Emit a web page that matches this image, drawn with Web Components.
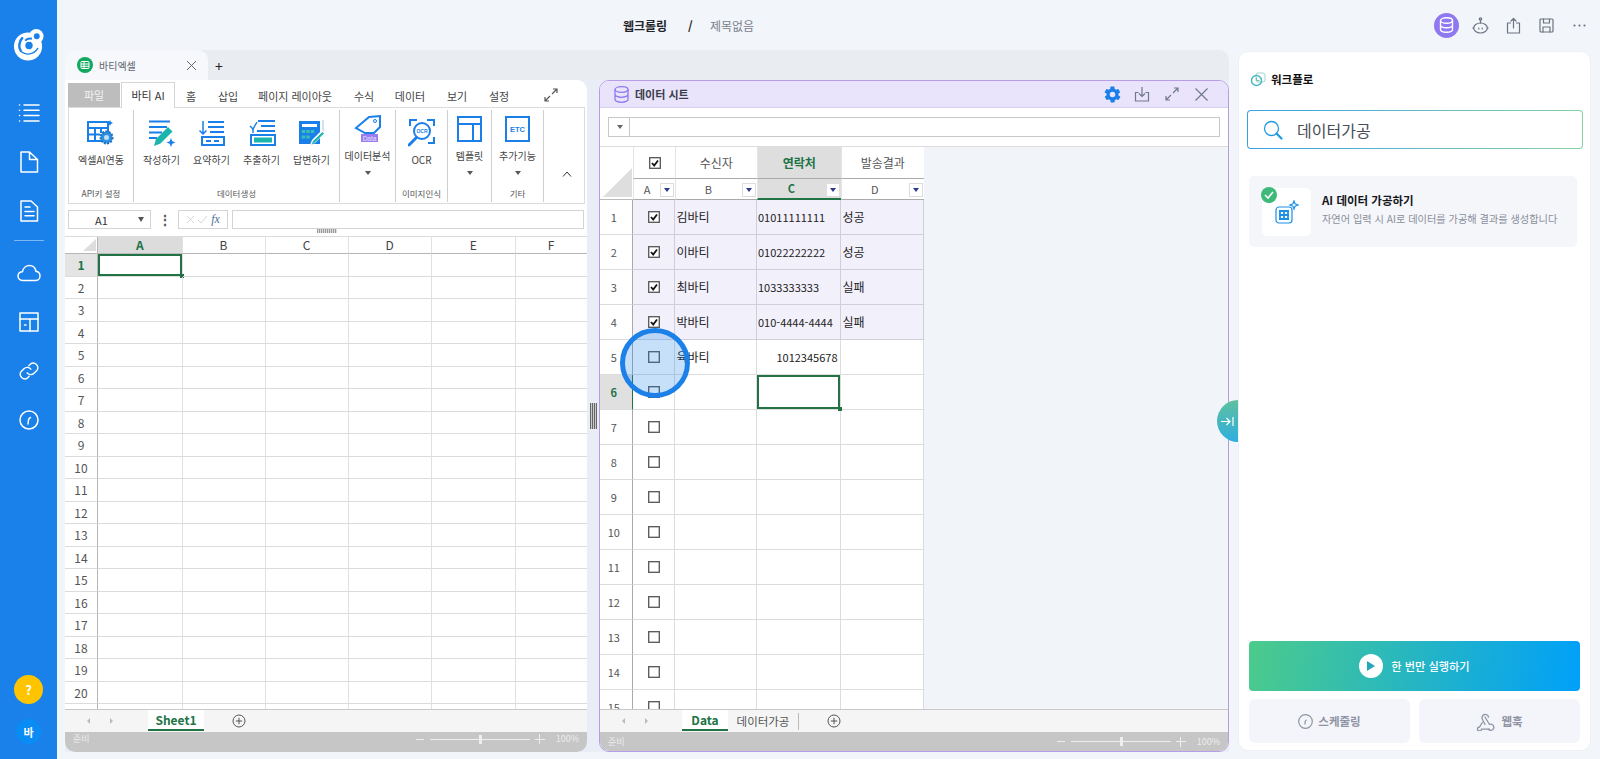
<!DOCTYPE html>
<html lang="ko">
<head>
<meta charset="utf-8">
<title>웹크롤링</title>
<style>
  html, body { margin: 0; height: 759px; overflow: hidden; }
  body { background: #f2f5fa; font-family: "Noto Sans CJK KR", "Noto Sans", sans-serif; }
  app-shell { width: 1600px; height: 759px; }
</style>
</head>
<body>
<app-shell>
  <app-sidebar slot="side"></app-sidebar>
  <app-topbar slot="top"></app-topbar>
  <work-space slot="work"></work-space>
  <work-flow slot="flow"></work-flow>
</app-shell>

<script>
const FONT = '"Noto Sans CJK KR", "Noto Sans", sans-serif';
const GREEN = "#217346";
const BLUE = "#1a7fe8";

class AppShell extends HTMLElement {
  constructor() { super(); this.attachShadow({ mode: "open" }); }
  connectedCallback() {
    this.shadowRoot.innerHTML = `
      <style>
        :host { display: grid; grid-template-columns: 57px 1fr; }
        .main { display: flex; flex-direction: column; height: 759px; }
        .body { display: flex; padding-left: 8px; height: 702px; }
      </style>
      <slot name="side"></slot>
      <div class="main">
        <slot name="top"></slot>
        <div class="body">
          <slot name="work"></slot>
          <slot name="flow"></slot>
        </div>
      </div>`;
  }
}

class AppSidebar extends HTMLElement {
  constructor() { super(); this.attachShadow({ mode: "open" }); }
  connectedCallback() {
    const s = `fill="none" stroke="#fff" stroke-width="1.500" stroke-linecap="round" stroke-linejoin="round"`;
    this.shadowRoot.innerHTML = `
      <style>
        :host { display: flex; flex-direction: column; align-items: center; height: 759px; background: #1a80ea; font-family: ${FONT}; }
        .logo { margin-top: 29px; height: 32px; }
        .ic { height: 49px; width: 57px; display: flex; align-items: center; justify-content: center; }
        .first { margin-top: 27px; }
        hr { width: 30px; margin: 5px 0 7px; border: 0; border-top: 1px solid #7db8f4; }
        .grow { flex: 1; }
        .help { width: 29px; height: 29px; border-radius: 50%; background: #ffc400; color: #fff; font-size: 13px; font-weight: 700; display: flex; align-items: center; justify-content: center; }
        .me { width: 25px; height: 25px; margin: 15px 0 15px; border-radius: 50%; background: #0a8cf5; color: #fff; font-size: 11px; font-weight: 700; display: flex; align-items: center; justify-content: center; }
      </style>
      <svg class="logo" width="32" height="33" viewBox="0 0 32 33">
        <circle cx="15" cy="18" r="14.500" fill="#fff"/>
        <circle cx="23.500" cy="7.500" r="7.500" fill="#fff"/>
        <circle cx="24" cy="7.500" r="3" fill="#1a80ea"/>
        <path d="M9 9.500C5.500 13 5 19 7.500 22.500" fill="none" stroke="#1a80ea" stroke-width="2.500" stroke-linecap="round"/>
        <path d="M8 23.500C13 27.500 21 26.500 25 20" fill="none" stroke="#1a80ea" stroke-width="1.500" stroke-linecap="round"/>
        <circle cx="16" cy="17" r="3.800" fill="#1a80ea"/>
        <path d="M12 12c2-2 5-2.500 7-2" fill="none" stroke="#1a80ea" stroke-width="2"/>
      </svg>
      <div class="ic first"><svg width="22" height="22" viewBox="0 0 22 22" ${s}><path d="M6 3h15M6 8.300h15M6 13.600h15M6 19h15M1.500 3h.1M1.500 8.300h.1M1.500 13.600h.1M1.500 19h.1"/></svg></div>
      <div class="ic"><svg width="20" height="22" viewBox="0 0 20 22" ${s}><path d="M2 1h8.500v7.500H18.500V21H2zM10.500 1l8 7.500"/></svg></div>
      <div class="ic"><svg width="20" height="22" viewBox="0 0 20 22" ${s}><path d="M2 1h10l6.500 6V21H2zM6 7h5M6 11.500h9M6 15.800h9"/></svg></div>
      <hr>
      <div class="ic"><svg width="24" height="18" viewBox="0 0 24 18" ${s}><path d="M6 16.500C3 16.500 1 14.500 1 12c0-2.500 2-4.300 4.500-4.300C6 4 9 1.500 12.500 1.500c3.500 0 6 2.500 6.300 5.800 2.500.3 4.200 2.200 4.200 4.600 0 2.500-2 4.600-4.500 4.600z"/></svg></div>
      <div class="ic"><svg width="20" height="20" viewBox="0 0 20 20" ${s}><rect x="1" y="1" width="18" height="18"/><path d="M1 7h18M11 7v12M5.500 13h1.500" /></svg></div>
      <div class="ic"><svg width="22" height="22" viewBox="0 0 24 24" ${s}><path d="M10 14a5 5 0 0 0 7.500.5l3-3a5 5 0 0 0-7-7l-1.700 1.700"/><path d="M14 10a5 5 0 0 0-7.500-.5l-3 3a5 5 0 0 0 7 7l1.700-1.700"/></svg></div>
      <div class="ic"><svg width="20" height="20" viewBox="0 0 20 20" ${s}><circle cx="10" cy="10" r="9"/><path d="M9 14l.5-4c.1-1 .8-2 2-2.500"/></svg></div>
      <div class="grow"></div>
      <div class="help">?</div>
      <div class="me">바</div>`;
  }
}

class AppTopbar extends HTMLElement {
  constructor() { super(); this.attachShadow({ mode: "open" }); }
  connectedCallback() {
    const s = `fill="none" stroke="#6d7382" stroke-width="1.200" stroke-linecap="round" stroke-linejoin="round"`;
    this.shadowRoot.innerHTML = `
      <style>
        :host { display: flex; align-items: center; height: 50px; flex: none; font-family: ${FONT}; font-size: 12px; }
        b { margin-left: 566px; color: #22242a; font-weight: 700; width: 44px; white-space: nowrap; }
        i { margin-left: 21px; font-style: normal; font-weight: 700; color: #222; width: 22px; }
        span { color: #7b808c; white-space: nowrap; }
        .tools { margin-left: auto; display: flex; align-items: center; margin-right: 4px; }
        .t { width: 33px; display: flex; justify-content: center; }
        .db { width: 25px; height: 25px; border-radius: 50%; background: #8f78f0; display: flex; align-items: center; justify-content: center; margin-right: 5px; }
      </style>
      <b>웹크롤링</b><i>/</i><span>제목없음</span>
      <div class="tools">
        <div class="db"><svg width="15" height="16" viewBox="0 0 15 16" fill="none" stroke="#fff" stroke-width="1.400"><ellipse cx="7.500" cy="3.500" rx="6" ry="2.700"/><path d="M1.500 3.500v9c0 1.500 2.700 2.700 6 2.700s6-1.200 6-2.700v-9M1.500 8c0 1.500 2.700 2.700 6 2.700s6-1.200 6-2.700"/></svg></div>
        <div class="t"><svg width="17" height="17" viewBox="0 0 17 17" ${s}><circle cx="8.500" cy="2" r="1.200"/><path d="M8.500 3.200v2.800"/><ellipse cx="8.500" cy="11" rx="6.800" ry="5"/><path d="M1.700 11H.8M15.300 11h.9M6.800 11v1M10.200 11v1"/></svg></div>
        <div class="t"><svg width="15" height="17" viewBox="0 0 15 17" ${s}><path d="M4.500 6H1.500v10h12V6h-3M7.500 11V1.500M5 4l2.500-2.500L10 4"/></svg></div>
        <div class="t"><svg width="15" height="15" viewBox="0 0 15 15" ${s}><rect x="1" y="1" width="13" height="13" rx="1"/><path d="M4.500 1v4h6V1M4 14V9h7v5"/></svg></div>
        <div class="t"><svg width="13" height="3" viewBox="0 0 13 3" fill="#6d7382"><circle cx="1.500" cy="1.500" r="1.100"/><circle cx="6.500" cy="1.500" r="1.100"/><circle cx="11.500" cy="1.500" r="1.100"/></svg></div>
      </div>`;
  }
}

class WorkSpace extends HTMLElement {
  constructor() { super(); this.attachShadow({ mode: "open" }); }
  connectedCallback() {
    this.shadowRoot.innerHTML = `
      <style>
        :host { display: flex; flex-direction: column; position: relative; width: 1164px; height: 702px; font-family: ${FONT};
                background: linear-gradient(#e9ecf1 0, #e9ecf1 30px, #e9edf5 30px); border-radius: 10px 10px 0 0; }
        .strip { display: flex; align-items: stretch; height: 30px; flex: none; }
        .tab { width: 143px; background: #f6f8fb; border-radius: 10px 10px 0 0; display: flex; align-items: center; padding: 0 12px; box-sizing: border-box; font-size: 10px; color: #5f6470; gap: 6px; }
        .tab .dot { width: 16px; height: 16px; border-radius: 50%; background: #12a860; display: flex; align-items: center; justify-content: center; flex: none; }
        .tab .x { margin-left: auto; display: flex; margin-right: -1px; }
        .plus { width: 22px; text-align: center; font-size: 14px; color: #222; line-height: 32px; }
        .panels { display: flex; height: 672px; }
        .split { width: 12px; display: flex; align-items: center; justify-content: center; }
        .grip { width: 7px; height: 26px; background: repeating-linear-gradient(90deg, #666 0 1px, #c9c9c9 1px 2px); }
        .edge { position: absolute; left: 1152px; top: 350px; width: 21px; height: 42px; border-radius: 21px 0 0 21px;
                background: linear-gradient(#5fc0a0, #2eaee0); display: flex; align-items: center; justify-content: center; }
      </style>
      <div class="strip">
        <div class="tab">
          <span class="dot"><svg width="10" height="10" viewBox="0 0 10 10" fill="none" stroke="#fff" stroke-width="1"><rect x="1" y="1.500" width="8" height="7" rx="1"/><path d="M1 4h8M1 6.300h8M4 1.500v7"/></svg></span>
          바티엑셀
          <span class="x"><svg width="11" height="11" viewBox="0 0 11 11" stroke="#666" stroke-width="1"><path d="M1 1l9 9M10 1l-9 9"/></svg></span>
        </div>
        <div class="plus">+</div>
      </div>
      <div class="panels">
        <excel-panel></excel-panel>
        <div class="split"><div class="grip"></div></div>
        <data-panel></data-panel>
      </div>
      <div class="edge"><svg width="15" height="11" viewBox="0 0 15 11" fill="none" stroke="#fff" stroke-width="1.200"><path d="M1 5.500h9M6.500 2l3.500 3.500L6.500 9M13 1v9"/></svg></div>`;
  }
}

class RibbonItem extends HTMLElement {
  constructor() { super(); this.attachShadow({ mode: "open" }); }
  connectedCallback() {
    const caret = this.hasAttribute("caret");
    this.shadowRoot.innerHTML = `
      <style>
        :host { display: flex; flex-direction: column; align-items: center; width: 50px; font-size: 10px; color: #444; white-space: nowrap; line-height: 14px; }
        .icon { height: 28px; display: flex; align-items: flex-end; justify-content: center; margin-top: ${caret ? 4 : 9}px; }
        .label { margin-top: ${caret ? 7 : 6}px; }
        .caret { width: 0; height: 0; margin-top: 8px; border: 3px solid transparent; border-top: 4px solid #555; border-bottom: 0; }
      </style>
      <div class="icon"><slot></slot></div>
      <div class="label">${this.getAttribute("label")}</div>
      ${caret ? `<div class="caret"></div>` : ""}`;
  }
}

class RibbonGroup extends HTMLElement {
  constructor() { super(); this.attachShadow({ mode: "open" }); }
  connectedCallback() {
    const w = this.getAttribute("w");
    const last = this.hasAttribute("last");
    this.shadowRoot.innerHTML = `
      <style>
        :host { display: flex; flex-direction: column; box-sizing: border-box; width: ${w}px; height: 92px; margin-top: 2px; ${last ? "" : "border-right: 1px solid #cfcfcf;"} }
        .items { flex: 1; display: flex; justify-content: center; }
        .name { height: 18px; line-height: 18px; font-size: 8.500px; color: #555; text-align: center; }
      </style>
      <div class="items"><slot></slot></div>
      <div class="name">${this.getAttribute("name") || ""}</div>`;
  }
}

class BottomBars extends HTMLElement {
  constructor() { super(); this.attachShadow({ mode: "open" }); }
  connectedCallback() {
    const left = this.getAttribute("variant") === "left";
    const tabs = left
      ? `<div style="width:35px"></div><div class="sheet on" style="width:56px;margin-left:-1px">Sheet1</div><div class="add" style="margin-left:28px">${this.plus()}</div>`
      : `<div style="width:33px"></div><div class="sheet on" style="width:46px">Data</div><div class="sheet two" style="width:71px">데이터가공</div><div class="add" style="margin-left:28px">${this.plus()}</div>`;
    this.shadowRoot.innerHTML = `
      <style>
        :host { display: block; flex: none; }
        .tabs { height: 23px; box-sizing: border-box; border-top: 1px solid #c8c8c8; background: #f5f5f5; display: flex; align-items: flex-start; }
        .nav { padding-left: 22px; box-sizing: border-box; display: flex; gap: 20px; height: 21px; align-items: center; flex: none; width: 49px; }
        .nav i { width: 0; height: 0; border: 3px solid transparent; }
        .nav i:first-child { border-right: 3px solid #bbb; border-left: 0; }
        .nav i:last-child { border-left: 3px solid #bbb; border-right: 0; }
        .sheet { height: 21px; box-sizing: border-box; line-height: 19px; font-size: 12px; text-align: center; color: #555; }
        .sheet.on { color: ${GREEN}; font-weight: 700; background: #fff; border-bottom: 2px solid ${GREEN}; }
        .sheet.two { font-size: 11.500px; border-right: 1px solid #bbb; margin-top: 3px; height: 17px; line-height: 16px; }
        .add { height: 21px; display: flex; align-items: center; }
        .status { height: ${left ? 20 : 19}px; background: #c6c6c6; display: flex; align-items: ${left ? "flex-start" : "center"}; padding: 0 8px; font-size: 9px; color: #ececec; line-height: 14px; ${left ? "border-radius: 0 0 10px 10px;" : ""} }
        .status .word { margin-right: auto; }
        .zoom { display: flex; align-items: center; height: 14px; color: #ececec; }
        .zoom u { display: block; width: 8px; height: 1px; background: #eee; margin-right: 6px; }
        .zoom s { display: block; position: relative; width: 100px; height: 1px; background: #eee; margin-right: 5px; }
        .zoom s::after { content: ""; position: absolute; left: 49px; top: -4px; width: 3px; height: 9px; background: #eee; }
        .zoom em { display: block; position: relative; width: 10px; height: 10px; margin-right: 11px; background: linear-gradient(#eee, #eee) center / 10px 1px no-repeat, linear-gradient(#eee, #eee) center / 1px 10px no-repeat; }
      </style>
      <div class="tabs">
        <div class="nav"><i></i><i></i></div>
        ${tabs}
      </div>
      <div class="status">
        <span class="word">준비</span>
        <div class="zoom"><u></u><s></s><em></em><span>100%</span></div>
      </div>`;
  }
  plus() {
    return `<svg width="14" height="14" viewBox="0 0 14 14" fill="none" stroke="#555" stroke-width="1"><circle cx="7" cy="7" r="6"/><path d="M3.800 7h6.400M7 3.800v6.400"/></svg>`;
  }
}

class ExcelGrid extends HTMLElement {
  constructor() { super(); this.attachShadow({ mode: "open" }); }
  connectedCallback() {
    const cols = ["A", "B", "C", "D", "E", "F"];
    let html = `<div class="corner"><svg width="13" height="12" viewBox="0 0 13 12"><path d="M13 0v12H0z" fill="#ddd"/></svg></div>`;
    cols.forEach((c, i) => { html += `<div class="col ${i === 0 ? "on" : ""}">${c}</div>`; });
    for (let r = 1; r <= 21; r++) {
      html += `<div class="row ${r === 1 ? "on" : ""}">${r <= 20 ? r : ""}</div>`;
      cols.forEach((c, i) => { html += `<div class="cell ${r === 1 && i === 0 ? "sel" : ""}"></div>`; });
    }
    this.shadowRoot.innerHTML = `
      <style>
        :host { display: block; height: 472px; overflow: hidden; background: #fff; }
        .g { display: grid; grid-template-columns: 33px 84.500px 83px 83px 83.500px 83.500px 72px; grid-template-rows: 17px repeat(21, 22.500px); }
        .corner { display: flex; align-items: flex-end; justify-content: flex-end; padding: 0 1px 2px 0; border-bottom: 1px solid #b5b5b5; border-right: 1px solid #b5b5b5; box-sizing: border-box; }
        .col { font-size: 12px; color: #444; text-align: center; line-height: 16px; border-bottom: 1px solid #b5b5b5; box-sizing: border-box; border-right: 1px solid #e2e2e2; }
        .col.on { background: #dcdcdc; color: ${GREEN}; font-weight: 700; border-bottom: 1px solid #bbb; }
        .row { font-size: 12px; color: #555; text-align: center; line-height: 22px; background: #fff; border-bottom: 1px solid #dcdcdc; border-right: 1px solid #b5b5b5; box-sizing: border-box; }
        .row.on { background: #e4e4e4; color: ${GREEN}; font-weight: 700; }
        .cell { border-bottom: 1px solid #dcdcdc; border-right: 1px solid #e0e0e0; box-sizing: border-box; position: relative; }
        .sel { box-shadow: inset 0 0 0 2px ${GREEN}; }
        .sel::after { content: ""; position: absolute; right: -2px; bottom: -2px; width: 4px; height: 4px; background: ${GREEN}; }
      </style>
      <div class="g">${html}</div>`;
  }
}

class ExcelPanel extends HTMLElement {
  constructor() { super(); this.attachShadow({ mode: "open" }); }
  connectedCallback() {
    const b = `fill="none" stroke="${BLUE}" stroke-width="2"`;
    this.shadowRoot.innerHTML = `
      <style>
        :host { display: flex; flex-direction: column; width: 522px; height: 672px; background: #fff; border-radius: 0 10px 10px 10px; font-family: ${FONT}; }
        .tabs { display: flex; height: 27px; flex: none; font-size: 11px; color: #444; padding-left: 3px; box-sizing: border-box; }
        .file { width: 52px; height: 24px; margin-top: 3px; background: #bdbdbd; color: #f2f2f2; text-align: center; line-height: 24px; margin-right: 1px; }
        .cur { width: 54px; height: 26px; margin-top: 2px; box-sizing: border-box; border: 1px solid #d5d5d5; border-bottom: 0; background: #fff; text-align: center; line-height: 25px; color: #333; position: relative; z-index: 1; }
        .t { text-align: center; line-height: 32px; height: 27px; }
        .exp { margin-left: 27px; display: flex; align-items: center; height: 27px; padding-top: 2px; box-sizing: border-box; }
        .ribbon { display: flex; height: 97px; flex: none; margin: 0 2px 0 3px; border: 1px solid #dcdcdc; box-sizing: border-box; }
        .col7 { display: flex; align-items: flex-end; justify-content: center; height: 100%; padding: 0 0 7px 6px; box-sizing: border-box; width: 100%; }
        .fbar { height: 33px; flex: none; box-sizing: border-box; padding: 6px 3px 0; position: relative; border-bottom: 1px solid #dcdcdc; display: flex; align-items: flex-start; }
        .name { width: 83px; height: 19px; box-sizing: border-box; border: 1px solid #d4d4d4; font-size: 11px; color: #333; display: flex; align-items: center; justify-content: center; position: relative; padding-right: 16px; }
        .name::after { content: ""; position: absolute; right: 6px; top: 6px; border: 3px solid transparent; border-top: 5px solid #555; border-bottom: 0; }
        .dots { width: 27px; text-align: center; font-size: 14px; font-weight: 700; color: #555; line-height: 18px; }
        .fx { width: 50px; height: 19px; box-sizing: border-box; border: 1px solid #d4d4d4; display: flex; align-items: center; justify-content: center; gap: 3px; font: italic 12px "Liberation Serif", serif; color: #4a6d9c; }
        .input { flex: 1; height: 19px; box-sizing: border-box; border: 1px solid #d4d4d4; margin-left: 4px; }
        .drag { position: absolute; left: 252px; bottom: 3px; width: 20px; height: 4px; background: repeating-linear-gradient(90deg, #999 0 1px, #ddd 1px 2px); }
      </style>
      <div class="tabs">
        <div class="file">파일</div>
        <div class="cur">바티 AI</div>
        <div class="t" style="width:32px">홈</div>
        <div class="t" style="width:42px">삽입</div>
        <div class="t" style="width:92px">페이지 레이아웃</div>
        <div class="t" style="width:46px">수식</div>
        <div class="t" style="width:46px">데이터</div>
        <div class="t" style="width:48px">보기</div>
        <div class="t" style="width:36px">설정</div>
        <div class="exp"><svg width="14" height="14" viewBox="0 0 14 14" fill="none" stroke="#555" stroke-width="1.200"><path d="M8 6l5-5M9 1h4v4M6 8l-5 5M1 9v4h4"/></svg></div>
      </div>
      <div class="ribbon">
        <ribbon-group w="65" name="API키 설정">
          <ribbon-item label="엑셀AI연동"><svg width="28" height="28" viewBox="0 0 28 28">
            <rect x="1" y="3" width="20" height="19" ${b}/><path d="M1 9h20M1 15.500h12M8 9v13M14 9v5" ${b}/>
            <circle cx="19.500" cy="18.500" r="6" fill="#2f8fe0" stroke="#1f6fc0" stroke-width="2" stroke-dasharray="2 1.300"/><circle cx="19.500" cy="18.500" r="2.500" fill="#bfe0f8"/>
            <path d="M23 1l1 2 2 1-2 1-1 2-1-2-2-1 2-1z" fill="${BLUE}"/></svg></ribbon-item>
        </ribbon-group>
        <ribbon-group w="206" name="데이터생성">
          <ribbon-item label="작성하기"><svg width="28" height="28" viewBox="0 0 28 28">
            <path d="M1 2.500h21M1 8h18M1 13.500h13M1 19h8" fill="none" stroke="${BLUE}" stroke-width="2.200"/>
            <path d="M6 27l2-7L20 8l4.500 4.500L12.500 24.500z" fill="#1cb5ad"/><path d="M23 19l1.300 3.200 3.200 1.300-3.200 1.300L23 28l-1.300-3.200-3.200-1.300 3.200-1.300z" fill="${BLUE}"/></svg></ribbon-item>
          <ribbon-item label="요약하기"><svg width="28" height="28" viewBox="0 0 28 28">
            <path d="M10 3h16M10 8h16M12 13h14" ${b}/><path d="M5 2v13M1.500 11.500L5 15l3.500-3.500" fill="none" stroke="${BLUE}" stroke-width="1.500"/>
            <rect x="4" y="18" width="22" height="8" ${b}/><path d="M8 22h5M16 22h5" ${b}/></svg></ribbon-item>
          <ribbon-item label="추출하기"><svg width="28" height="28" viewBox="0 0 28 28">
            <path d="M10 2h17M13 7h14M9 12h18" ${b}/><path d="M2 7l3 3 4-7" fill="none" stroke="${BLUE}" stroke-width="1.400"/><path d="M5 9v5" stroke="${BLUE}" stroke-width="1.400"/>
            <rect x="3" y="16" width="24" height="10" ${b}/><rect x="6" y="18.500" width="18" height="5" fill="#1cb5ad"/></svg></ribbon-item>
          <ribbon-item label="답변하기"><svg width="28" height="28" viewBox="0 0 28 28">
            <rect x="1" y="2" width="21" height="23" fill="${BLUE}"/><rect x="4" y="5" width="15" height="3" fill="#fff"/>
            <path d="M5.500 11v3M10 11v3M14.500 11v3M5.500 16.500v3M10 16.500v3" stroke="#36c0b5" stroke-width="3.500"/>
            <path d="M25 1v15" stroke="#9cc8f2"/><path d="M12 26l2-5 10-10 3 3-10 10z" fill="#fff"/><path d="M13.500 26l1.500-4 9.500-9 1.500 1.500-9.500 9.300z" fill="#1cb5ad"/></svg></ribbon-item>
        </ribbon-group>
        <ribbon-group w="56">
          <ribbon-item caret label="데이터분석"><svg width="28" height="28" viewBox="0 0 28 28">
            <path d="M2 14L15 3l11-1v11l-6 6H11z" ${b}/><circle cx="21" cy="7" r="1.500" fill="none" stroke="${BLUE}"/>
            <rect x="7" y="20" width="17" height="8" fill="#9a7cf0"/><text x="15.500" y="26.500" text-anchor="middle" font-size="6.500" fill="#e8e2ff" font-family="Liberation Sans, sans-serif">Data</text></svg></ribbon-item>
        </ribbon-group>
        <ribbon-group w="52" name="이미지인식">
          <ribbon-item label="OCR"><svg width="28" height="29" viewBox="0 0 28 29">
            <path d="M2 8V2h7M19 2h7v6M26 19v6h-6" ${b}/><circle cx="14" cy="13" r="8" ${b}/>
            <path d="M8 20L1 27" stroke="${BLUE}" stroke-width="3" stroke-linecap="round"/><text x="14" y="15" text-anchor="middle" font-size="5" font-weight="700" fill="${BLUE}" font-family="Liberation Sans, sans-serif">OCR</text></svg></ribbon-item>
        </ribbon-group>
        <ribbon-group w="44">
          <ribbon-item caret label="템플릿"><svg width="25" height="26" viewBox="0 0 25 26">
            <rect x="1" y="1" width="23" height="24" ${b}/><path d="M1 8h23M16 8v17" ${b}/></svg></ribbon-item>
        </ribbon-group>
        <ribbon-group w="52" name="기타">
          <ribbon-item caret label="추가기능"><svg width="25" height="26" viewBox="0 0 25 26">
            <rect x="1" y="1" width="23" height="24" ${b}/><text x="12.500" y="16" text-anchor="middle" font-size="7.500" font-weight="700" fill="${BLUE}" font-family="Liberation Sans, sans-serif">ETC</text></svg></ribbon-item>
        </ribbon-group>
        <ribbon-group w="40" last>
          <div class="col7"><svg width="10" height="6" viewBox="0 0 10 6" fill="none" stroke="#333" stroke-width="1"><path d="M1 5.500L5 1l4 4.500"/></svg></div>
        </ribbon-group>
      </div>
      <div class="fbar">
        <div class="name">A1</div>
        <div class="dots">⋮</div>
        <div class="fx"><svg width="22" height="9" viewBox="0 0 22 9" fill="none" stroke="#d8d8d8" stroke-width="1"><path d="M1 1l7 7M8 1L1 8M12 5l3 3 6-7"/></svg>fx</div>
        <div class="input"></div>
        <div class="drag"></div>
      </div>
      <excel-grid></excel-grid>
      <bottom-bars variant="left"></bottom-bars>`;
  }
}

class DataGrid extends HTMLElement {
  constructor() { super(); this.attachShadow({ mode: "open" }); }
  connectedCallback() {
    const rows = [
      ["김바티", "01011111111", "성공"],
      ["이바티", "01022222222", "성공"],
      ["최바티", "1033333333", "실패"],
      ["박바티", "010-4444-4444", "실패"],
      ["육바티", "1012345678", ""]
    ];
    const box = on => `<svg width="12" height="12" viewBox="0 0 12 12"><rect x=".7" y=".7" width="10.600" height="10.600" fill="#fff" stroke="#555" stroke-width="1.300"/>${on ? `<path d="M3 6l2.200 2.500L9 3.500" fill="none" stroke="#111" stroke-width="1.800"/>` : ""}</svg>`;
    const drop = `<i class="drop"></i>`;
    let html = `
      <div class="corner"><svg width="29" height="29" viewBox="0 0 29 29"><path d="M29 0v29H0z" fill="#dedede"/></svg></div>
      <div class="h mid2">${box(true)}</div><div class="h">수신자</div><div class="h on">연락처</div><div class="h">발송결과</div>
      <div class="l" style="padding-right:14px">A${drop}</div><div class="l">B${drop}</div><div class="l on">C${drop}</div><div class="l">D${drop}</div>`;
    for (let r = 1; r <= 15; r++) {
      const d = rows[r - 1] || ["", "", ""];
      const tint = r <= 4 ? "tint" : "";
      html += `<div class="n ${r === 6 ? "on" : ""}">${r}</div>`;
      html += `<div class="c mid ${tint}">${box(r <= 4)}</div>`;
      html += `<div class="c ${tint}">${d[0]}</div>`;
      html += `<div class="c tel ${tint} ${r === 5 ? "right" : ""} ${r === 6 ? "sel" : ""}">${d[1]}</div>`;
      html += `<div class="c ${tint}">${d[2]}</div>`;
    }
    this.shadowRoot.innerHTML = `
      <style>
        :host { display: block; height: 562px; overflow: hidden; position: relative; background: #f1f5f9; }
        .g { display: grid; width: 324.500px; grid-template-columns: 32.500px 42px 82.500px 83.500px 83.500px; grid-template-rows: 32px 20.500px repeat(15, 35px); }
        .corner { grid-row: 1 / 3; background: #fff; display: flex; align-items: flex-end; justify-content: flex-end; padding: 0 1px 2px 0; box-sizing: border-box; border-bottom: 1px solid #bbb; }
        .h { background: #fff; font-size: 12px; color: #555; display: flex; align-items: center; justify-content: center; border-bottom: 1px solid #aaa; box-sizing: border-box; border-left: 1px solid #e4e4e4; }
        .h.on { background: #dedede; color: ${GREEN}; font-weight: 700; }
        .h.mid2 { padding-left: 1px; }
        .l { background: #fff; font-size: 11px; color: #555; display: flex; align-items: center; justify-content: center; padding-right: 16px; box-sizing: border-box; position: relative; border-bottom: 1px solid #aaa; border-left: 1px solid #e4e4e4; }
        .l.on { background: #dedede; color: ${GREEN}; font-weight: 700; border-bottom: 2px solid ${GREEN}; }
        .drop { position: absolute; right: 1px; top: 4px; width: 14px; height: 14px; background: #fff; border: 1px solid #ddd; box-sizing: border-box; }
        .drop::after { content: ""; position: absolute; left: 3px; top: 4px; border: 3px solid transparent; border-top: 4px solid #2b3a8c; border-bottom: 0; }
        .n { background: #fff; font-size: 11px; color: #555; display: flex; align-items: center; justify-content: center; padding-right: 4px; box-sizing: border-box; border-bottom: 1px solid #dcdcdc; border-right: 1px solid #aaa; }
        .n.on { background: #e0e0e0; color: ${GREEN}; font-weight: 700; border-right: 1px solid ${GREEN}; }
        .c { background: #fff; font-size: 12px; color: #222; display: flex; align-items: center; padding-left: 2px; box-sizing: border-box; border-bottom: 1px solid #dcdcdc; border-right: 1px solid #dcdcdc; white-space: nowrap; overflow: hidden; }
        .tint { background: #f2f0fb; border-color: #cfcfdc; }
        .mid { justify-content: center; padding: 0 0 0 1px; }
        .tel { font-size: 11px; padding-left: 1px; }
        .right { justify-content: flex-end; padding-right: 2px; }
        .sel { box-shadow: inset 0 0 0 2px ${GREEN}; overflow: visible; position: relative; }
        .sel::after { content: ""; position: absolute; right: -2px; bottom: -2px; width: 4px; height: 4px; background: ${GREEN}; }
        .pointer { position: absolute; left: 20px; top: 181px; width: 70px; height: 70px; box-sizing: border-box; border-radius: 50%; border: 5px solid #1b80e8; background: rgba(30, 130, 235, .25); }
      </style>
      <div class="g">${html}</div>
      <div class="pointer"></div>`;
  }
}

class DataPanel extends HTMLElement {
  constructor() { super(); this.attachShadow({ mode: "open" }); }
  connectedCallback() {
    const g = `fill="none" stroke="#6f7890" stroke-width="1.200"`;
    this.shadowRoot.innerHTML = `
      <style>
        :host { display: flex; flex-direction: column; width: 630px; height: 672px; box-sizing: border-box; border: 1px solid #b79de6; border-radius: 10px; background: #fff; overflow: hidden; font-family: ${FONT}; }
        .head { height: 27px; flex: none; background: #e9e4fb; border-bottom: 1px solid #d6d0ec; box-sizing: border-box; display: flex; align-items: center; padding-left: 14px; font-size: 11px; font-weight: 700; color: #3a3d4a; gap: 6px; }
        .acts { margin-left: auto; display: flex; align-items: center; margin-right: 12px; }
        .a { width: 29.500px; display: flex; justify-content: center; }
        .cellbar { height: 39px; flex: none; box-sizing: border-box; border-bottom: 1px solid #dcdcdc; padding: 9px 8px 0 8px; display: flex; }
        .pick { width: 22px; height: 20px; box-sizing: border-box; border: 1px solid #c8c8c8; position: relative; }
        .pick::after { content: ""; position: absolute; left: 8px; top: 7px; border: 3px solid transparent; border-top: 4px solid #666; border-bottom: 0; }
        .val { flex: 1; height: 20px; box-sizing: border-box; border: 1px solid #c8c8c8; border-left: 0; }
      </style>
      <div class="head">
        <svg width="15" height="17" viewBox="0 0 15 17" fill="none" stroke="#8f78f0" stroke-width="1.300"><ellipse cx="7.500" cy="3.500" rx="6.500" ry="2.800"/><path d="M1 3.500v10c0 1.500 2.900 2.800 6.500 2.800s6.500-1.300 6.500-2.800v-10M1 8.500c0 1.500 2.900 2.800 6.500 2.800s6.500-1.300 6.500-2.800"/></svg>
        데이터 시트
        <div class="acts">
          <div class="a"><svg width="19" height="19" viewBox="0 0 24 24"><path fill="${BLUE}" d="M19.400 13c.1-.3.1-.7.1-1s0-.7-.1-1l2.100-1.600c.2-.2.200-.4.100-.6l-2-3.500c-.1-.2-.4-.3-.6-.2l-2.500 1c-.5-.4-1.100-.7-1.700-1l-.4-2.600c0-.3-.2-.5-.5-.5h-4c-.3 0-.5.200-.5.500l-.4 2.600c-.6.300-1.200.6-1.700 1l-2.500-1c-.2-.1-.5 0-.6.200l-2 3.500c-.1.200-.1.500.1.600L4.600 11c-.1.300-.1.700-.1 1s0 .7.100 1l-2.100 1.600c-.2.200-.2.400-.1.600l2 3.500c.1.200.4.300.6.200l2.500-1c.5.400 1.100.7 1.700 1l.4 2.600c0 .3.200.5.500.5h4c.3 0 .5-.2.500-.5l.4-2.600c.6-.3 1.200-.6 1.700-1l2.500 1c.2.100.5 0 .6-.2l2-3.500c.1-.2.1-.5-.1-.6zM12 15.500a3.500 3.500 0 1 1 0-7 3.500 3.500 0 0 1 0 7z"/></svg></div>
          <div class="a"><svg width="16" height="16" viewBox="0 0 16 16" ${g}><path d="M4.500 6.500H1.500V15h13V6.500h-3M8 1v9M5 7.500L8 10.500l3-3"/></svg></div>
          <div class="a"><svg width="14" height="14" viewBox="0 0 14 14" ${g}><path d="M8 6l5-5M9 1h4v4M6 8l-5 5M1 9v4h4"/></svg></div>
          <div class="a"><svg width="13" height="13" viewBox="0 0 13 13" ${g}><path d="M.5.500l12 12M12.500.500l-12 12"/></svg></div>
        </div>
      </div>
      <div class="cellbar"><div class="pick"></div><div class="val"></div></div>
      <data-grid></data-grid>
      <bottom-bars variant="right"></bottom-bars>`;
  }
}

class WorkFlow extends HTMLElement {
  constructor() { super(); this.attachShadow({ mode: "open" }); }
  connectedCallback() {
    this.shadowRoot.innerHTML = `
      <style>
        :host { display: flex; flex-direction: column; width: 353px; height: 700px; margin: 1px 0 0 9px; box-sizing: border-box; background: #fff; border-radius: 10px; border: 1px solid #eef0f5; font-family: ${FONT}; }
        .title { display: flex; align-items: center; gap: 5px; height: 14px; margin: 20px 0 0 11px; font-size: 11.500px; font-weight: 700; color: #111; }
        .search { display: flex; align-items: center; height: 39px; margin: 24px 7px 0 8px; flex: none; box-sizing: border-box; border: 1px solid transparent; border-radius: 4px;
                  background: linear-gradient(#fff, #fff) padding-box, linear-gradient(90deg, #3a9fe8, #86d2a4) border-box; padding-left: 15px; gap: 14px; font-size: 16px; color: #4a4d55; }
        .card { display: flex; align-items: center; height: 71px; flex: none; margin: 27px 13px 0 10px; background: #f4f6fa; border-radius: 5px; padding-left: 13px; }
        .pic { width: 49px; height: 48px; background: #fff; border-radius: 5px; position: relative; display: flex; align-items: center; justify-content: center; flex: none; }
        .ok { position: absolute; left: -1px; top: -1px; width: 16px; height: 16px; border-radius: 50%; background: #3fb97a; display: flex; align-items: center; justify-content: center; }
        .txt { margin: -5px 0 0 11px; white-space: nowrap; }
        .txt b { display: block; font-size: 11.500px; font-weight: 700; color: #15171c; line-height: 16px; }
        .txt span { display: block; font-size: 10.200px; color: #8a8f9a; line-height: 14px; margin-top: 4px; }
        .grow { flex: 1; }
        .run { display: flex; align-items: center; justify-content: center; gap: 8px; height: 50px; flex: none; margin: 0 10px; border-radius: 4px; background: linear-gradient(100deg, #4ccb8b, #00a0fa); color: #fff; font-size: 11.200px; font-weight: 500; }
        .play { width: 24px; height: 24px; border-radius: 50%; background: #fff; display: flex; align-items: center; justify-content: center; }
        .two { display: grid; grid-template-columns: 1fr 1fr; gap: 9px; margin: 8px 10px 7px; }
        .btn { height: 44px; background: #f3f5fa; border-radius: 6px; display: flex; align-items: center; justify-content: center; gap: 5px; font-size: 11.500px; font-weight: 700; color: #8f93a3; }
      </style>
      <div class="title">
        <svg width="16" height="15" viewBox="0 0 16 15" fill="none" stroke-width="1.500"><rect x="6" y="1" width="9" height="9" rx="2" stroke="#9fd4cf" stroke-width="1"/><circle cx="6.500" cy="8.500" r="5" stroke="#4bb8c4"/><path d="M6.500 5.500v3h3" stroke="#66c9a8" stroke-width="1"/></svg>
        워크플로
      </div>
      <div class="search">
        <svg width="20" height="20" viewBox="0 0 20 20" fill="none"><circle cx="8.500" cy="8.500" r="7" stroke="#1f9be0" stroke-width="1.300"/><path d="M13.500 13.500l5 5" stroke="#1f9be0" stroke-width="2.200" stroke-linecap="round"/></svg>
        데이터가공
      </div>
      <div class="card">
        <div class="pic">
          <span class="ok"><svg width="10" height="8" viewBox="0 0 10 8" fill="none" stroke="#fff" stroke-width="1.600"><path d="M1 4l3 3 5-6"/></svg></span>
          <svg width="24" height="24" viewBox="0 0 24 24" fill="none" stroke="#1a8fe8" stroke-width="1.200"><rect x="1" y="7" width="16" height="16" rx="3"/><path d="M4 11h10M4 15h10M4 19h10M5 10.500v9M9 10.500v9M13 10.500v9" stroke-width="1.800"/><path d="M19 1l1.100 2.900L23 5l-2.900 1.100L19 9l-1.100-2.900L15 5l2.900-1.100z"/></svg>
        </div>
        <div class="txt"><b>AI 데이터 가공하기</b><span>자연어 입력 시 AI로 데이터를 가공해 결과를 생성합니다</span></div>
      </div>
      <div class="grow"></div>
      <div class="run"><span class="play"><svg width="8" height="10" viewBox="0 0 8 10"><path d="M0 0l8 5-8 5z" fill="#22a8b8"/></svg></span>한 번만 실행하기</div>
      <div class="two">
        <div class="btn"><svg width="15" height="15" viewBox="0 0 15 15" fill="none" stroke="#8f93a3" stroke-width="1.200"><circle cx="7.500" cy="7.500" r="6.800"/><path d="M6.800 10.500l.4-3c.1-.8.6-1.400 1.500-1.800"/></svg>스케줄링</div>
        <div class="btn"><svg width="20" height="19" viewBox="0 0 20 19" fill="none" stroke="#8f93a3" stroke-width="1.300" stroke-linecap="round"><path d="M9 12.500L6.500 7.500a3.300 3.300 0 1 1 6 -2.500"/><path d="M6.300 10.500L3.500 15a2 2 0 1 0 2 2.200h8"/><path d="M9 5l4.500 7.500a3 3 0 1 1 -1 4.700"/></svg>웹훅</div>
      </div>`;
  }
}

customElements.define("app-shell", AppShell);
customElements.define("app-sidebar", AppSidebar);
customElements.define("app-topbar", AppTopbar);
customElements.define("work-space", WorkSpace);
customElements.define("ribbon-item", RibbonItem);
customElements.define("ribbon-group", RibbonGroup);
customElements.define("bottom-bars", BottomBars);
customElements.define("excel-grid", ExcelGrid);
customElements.define("excel-panel", ExcelPanel);
customElements.define("data-grid", DataGrid);
customElements.define("data-panel", DataPanel);
customElements.define("work-flow", WorkFlow);
</script>
</body>
</html>
